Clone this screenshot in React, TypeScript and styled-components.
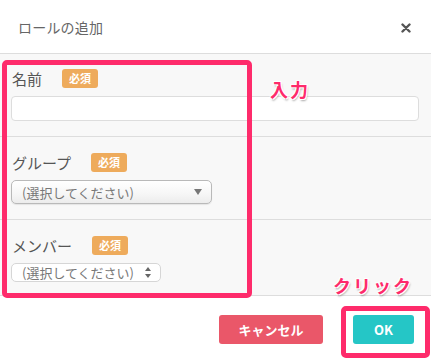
import React from 'react';
import styled, { createGlobalStyle } from 'styled-components';

const GlobalStyle = createGlobalStyle`
  html, body {
    margin: 0;
    padding: 0;
    background: #fff;
  }
  body {
    font-family: "Noto Sans CJK JP", "Liberation Sans", sans-serif;
  }
`;

const PINK = '#fe2b6b';

const Modal = styled.div`
  position: relative;
  width: 431px;
  height: 360px;
  background: #fff;
  overflow: hidden;
`;

const Header = styled.div`
  height: 53px;
  display: flex;
  align-items: center;
  justify-content: space-between;
  padding: 0 20px 0 18px;
  border-bottom: 1px solid #ddd;
`;

const Title = styled.div`
  font-size: 14px;
  color: #666;
  letter-spacing: 0.2px;
`;

const CloseIcon = styled.svg`
  width: 10px;
  height: 10px;
  margin-top: 2px;
`;

const Body = styled.div`
  background: #f8f8f8;
`;

const Section = styled.div<{ $pt?: number; $pb?: number }>`
  padding: ${(p) => p.$pt ?? 15}px 11px ${(p) => p.$pb ?? 15}px;
  border-bottom: 1px solid #ddd;
`;

const LabelRow = styled.div`
  display: flex;
  align-items: center;
  gap: 20px;
  height: 20px;
  margin-bottom: 8px;
  padding-left: 1px;
`;

const Label = styled.span`
  font-size: 15px;
  color: #555;
`;

const Badge = styled.span`
  display: inline-flex;
  align-items: center;
  justify-content: center;
  width: 36px;
  height: 19px;
  border-radius: 3px;
  background: #eeab5c;
  color: #fff;
  font-size: 11px;
  font-weight: bold;
`;

const TextInput = styled.div`
  height: 25px;
  box-sizing: border-box;
  background: #fff;
  border: 1px solid #ddd;
  border-radius: 4px;
  width: 408px;
`;

const Select = styled.div<{ $w: number; $h: number; $plain?: boolean }>`
  box-sizing: border-box;
  width: ${(p) => p.$w}px;
  height: ${(p) => p.$h}px;
  display: flex;
  align-items: center;
  justify-content: space-between;
  padding: 0 9px 0 10px;
  border: 1px solid ${(p) => (p.$plain ? '#d6d6d6' : '#b9b9b9')};
  border-radius: 5px;
  background: ${(p) =>
    p.$plain ? '#fff' : 'linear-gradient(#ffffff, #f6f6f6 60%, #ececec)'};
  box-shadow: ${(p) => (p.$plain ? 'none' : '0 1px 1px rgba(0,0,0,0.08)')};
  font-size: 13px;
  color: #777;
`;

const Caret = styled.span`
  width: 0;
  height: 0;
  border-left: 4px solid transparent;
  border-right: 4px solid transparent;
  border-top: 6px solid #777;
`;

const Footer = styled.div`
  display: flex;
  justify-content: flex-end;
  gap: 30px;
  padding: 19px 17px 0 0;
`;

const Button = styled.div<{ $color: string; $w: number }>`
  width: ${(p) => p.$w}px;
  height: 29px;
  border-radius: 3px;
  background: ${(p) => p.$color};
  color: #fff;
  font-size: 13px;
  font-weight: bold;
  display: flex;
  align-items: center;
  justify-content: center;
`;

const Highlight = styled.div<{ $x: number; $y: number; $w: number; $h: number }>`
  position: absolute;
  left: ${(p) => p.$x}px;
  top: ${(p) => p.$y}px;
  width: ${(p) => p.$w}px;
  height: ${(p) => p.$h}px;
  box-sizing: border-box;
  border: 5px solid ${PINK};
  border-radius: 5px;
  pointer-events: none;
`;

const Note = styled.div<{ $x: number; $y: number }>`
  position: absolute;
  left: ${(p) => p.$x}px;
  top: ${(p) => p.$y}px;
  color: ${PINK};
  font-size: 18px;
  font-weight: bold;
  letter-spacing: 2px;
  line-height: 1;
  text-shadow: -1px -1px 0 #fff, 1px -1px 0 #fff, -1px 1px 0 #fff,
    1px 1px 0 #fff, 1px 2px 2px rgba(0, 0, 0, 0.35);
`;

const App = () => (
  <>
    <GlobalStyle />
    <Modal>
      <Header>
        <Title>ロールの追加</Title>
        <CloseIcon viewBox="0 0 10 10">
          <path d="M1.5 1.5 L8.5 8.5 M8.5 1.5 L1.5 8.5" stroke="#555" strokeWidth="2.4" strokeLinecap="round" />
        </CloseIcon>
      </Header>
      <Body>
        <Section $pt={14}>
          <LabelRow>
            <Label>名前</Label>
            <Badge>必須</Badge>
          </LabelRow>
          <TextInput />
        </Section>
        <Section>
          <LabelRow>
            <Label>グループ</Label>
            <Badge>必須</Badge>
          </LabelRow>
          <Select $w={201} $h={24}>
            <span>(選択してください)</span>
            <Caret />
          </Select>
        </Section>
        <Section $pb={13}>
          <LabelRow>
            <Label>メンバー</Label>
            <Badge>必須</Badge>
          </LabelRow>
          <Select $w={150} $h={19} $plain>
            <span>(選択してください)</span>
            <svg width="6" height="11" viewBox="0 0 6 11">
              <path d="M0 4 L3 0 L6 4 Z M0 7 L3 11 L6 7 Z" fill="#666" />
            </svg>
          </Select>
        </Section>
      </Body>
      <Footer>
        <Button $color="#ea5769" $w={104}>キャンセル</Button>
        <Button $color="#25c6c6" $w={61}>OK</Button>
      </Footer>
      <Highlight $x={2} $y={60} $w={250} $h={238} />
      <Highlight $x={341} $y={306} $w={89} $h={52} />
      <Note $x={270} $y={80}>入力</Note>
      <Note $x={333} $y={276}>クリック</Note>
    </Modal>
  </>
);

export default App;
